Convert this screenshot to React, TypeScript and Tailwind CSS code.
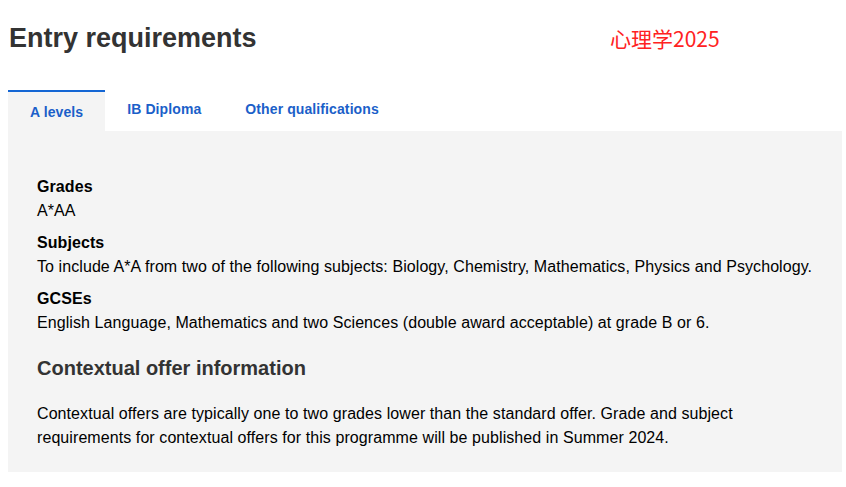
import React from "react";

// ── Data ─────────────────────────────────────────────────────────
const tabs = ["A levels", "IB Diploma", "Other qualifications"];

const requirements = [
  { label: "Grades", text: "A*AA" },
  {
    label: "Subjects",
    text: "To include A*A from two of the following subjects: Biology, Chemistry, Mathematics, Physics and Psychology.",
  },
  {
    label: "GCSEs",
    text: "English Language, Mathematics and two Sciences (double award acceptable) at grade B or 6.",
  },
];

// ── Component ─────────────────────────────────────────────────────
export default function App() {
  const active = 0;

  return (
    <div
      className="min-h-[487px] w-[846px] bg-white"
      style={{ fontFamily: '"Liberation Sans", Arial, sans-serif' }}
    >
      <div className="flex items-start pl-[9px] pt-[20px]">
        <h1 className="w-[601px] text-[27px] font-bold leading-[36px] text-[#333333]">
          Entry requirements
        </h1>
        <span
          className="pt-[4px] text-[21px] leading-[28px] text-[#ff2222]"
          style={{ fontFamily: '"Noto Sans CJK SC", "Liberation Sans", sans-serif' }}
        >
          心理学2025
        </span>
      </div>

      <div className="ml-2 mt-[34px] w-[834px]">
        <div className="flex items-start">
          {tabs.map((t, i) => (
            <button
              key={t}
              type="button"
              className={
                i === active
                  ? "h-[41px] border-t-2 border-[#1466d4] bg-[#f4f4f4] px-[22px] pt-[1px] text-[14px] font-bold tracking-[0.1px] text-[#1b5fc9]"
                  : "h-[41px] px-[22px] pb-[2px] text-[14px] font-bold tracking-[0.1px] text-[#1b5fc9]"
              }
            >
              {t}
            </button>
          ))}
        </div>

        <div className="bg-[#f4f4f4] px-[29px] pb-[22px] pt-[44px] text-[16px] leading-[24px] tracking-[0.08px] text-black">
          <div className="flex flex-col gap-2">
            {requirements.map((r) => (
              <div key={r.label}>
                <p className="font-bold">{r.label}</p>
                <p>{r.text}</p>
              </div>
            ))}
          </div>

          <h2 className="mt-[19px] text-[20px] font-bold leading-[28px] tracking-normal text-[#333333]">
            Contextual offer information
          </h2>
          <p className="mt-[20px]">
            Contextual offers are typically one to two grades lower than the standard offer. Grade and subject
            <br />
            requirements for contextual offers for this programme will be published in Summer 2024.
          </p>
        </div>
      </div>
    </div>
  );
}
